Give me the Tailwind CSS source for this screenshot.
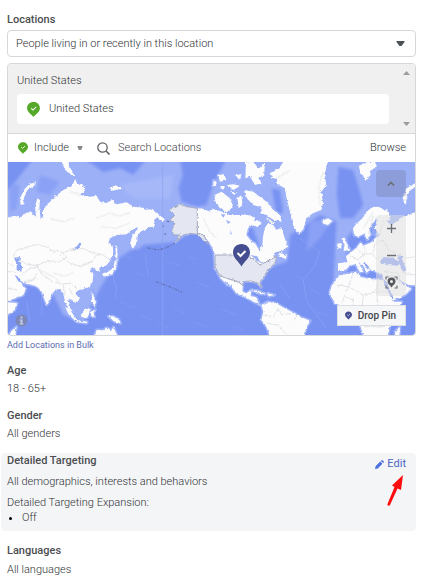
<!DOCTYPE html>
<html lang="en">

<head>
    <meta charset="UTF-8">
    <meta name="viewport" content="width=device-width, initial-scale=1.0">
    <title>Audience - Locations & Targeting</title>
    <script src="https://cdn.jsdelivr.net/npm/@tailwindcss/browser@4"></script>
</head>

<body class="bg-white font-['Roboto',sans-serif] text-[11px] leading-4 font-light text-[#303236]">

    <!-- Shared icons -->
    <svg class="hidden">
        <symbol id="pin" viewBox="0 0 24 28">
            <path d="M12 0C5 0 0 5 0 11.500c0 7 8 11 12 16.500 4-5.500 12-9.500 12-16.500C24 5 19 0 12 0z" fill="currentColor" />
            <path d="M7.500 12l3.500 3 6-6" fill="none" stroke="#fff" stroke-width="2" />
        </symbol>
    </svg>

    <main class="pt-[12px] pr-[11px] pl-[7px]">

        <!-- Locations -->
        <section>
            <label for="locationType" class="block font-medium text-[#4b4d50]">Locations</label>
            <div class="relative mt-[2px]">
                <select id="locationType"
                    class="block h-[27px] w-full appearance-none rounded-[4px] border border-[#d6d7da] bg-white pl-[8px] pr-8">
                    <option>People living in or recently in this location</option>
                </select>
                <svg class="pointer-events-none absolute top-[11px] right-[11px] h-[5px] w-[9px]" viewBox="0 0 9 5">
                    <path d="M.5 0h8v1L5.500 5h-2L.5 1z" fill="#4b4f56" />
                </svg>
            </div>

            <div class="mt-[6px] overflow-hidden rounded-[4px] border border-[#d6d7da]">
                <!-- Selected locations -->
                <div class="flex border-b border-[#d6d7da] bg-[#f0f0f0]">
                    <div class="flex-1 pt-[9px] pb-[9px] pl-[9px]">
                        <h3>United States</h3>
                        <div class="mt-[5px] flex h-[30px] items-center gap-[9px] rounded-[4px] bg-white pl-[10px]">
                            <svg class="h-[15px] w-[13px] text-[#56a829]"><use href="#pin" /></svg>
                            <span>United States</span>
                        </div>
                    </div>
                    <div class="flex w-[26px] flex-col items-end justify-between pt-[7px] pr-[5px] pb-[7px]">
                        <svg class="h-[4px] w-[7px]" viewBox="0 0 7 4"><path d="M0 4L3.500 0 7 4z" fill="#9c9c9c" /></svg>
                        <svg class="h-[4px] w-[7px]" viewBox="0 0 7 4"><path d="M0 0L3.500 4 7 0z" fill="#9c9c9c" /></svg>
                    </div>
                </div>

                <!-- Search bar -->
                <div class="flex h-[28px] items-center pr-[9px] pl-[10px]">
                    <svg class="h-[12px] w-[10px] text-[#56a829]"><use href="#pin" /></svg>
                    <div class="relative ml-[6px]">
                        <select aria-label="Include or exclude" class="block w-[49px] appearance-none bg-transparent">
                            <option>Include</option>
                        </select>
                        <svg class="pointer-events-none absolute top-[6px] right-0 h-[4px] w-[6px]" viewBox="0 0 6 4">
                            <path d="M.5 0h5v1L4 4H2L.5 1z" fill="#85878c" />
                        </svg>
                    </div>
                    <svg class="ml-[14px] h-[13px] w-[13px]" viewBox="0 0 13 13" fill="none" stroke="#606266">
                        <circle cx="5.500" cy="5.500" r="4.700" stroke-width="1.300" />
                        <path d="M9 9l3.500 3.500" stroke-width="1.600" />
                    </svg>
                    <input type="text" placeholder="Search Locations" aria-label="Search Locations"
                        class="ml-[8px] min-w-0 flex-1 placeholder:text-[#404247] focus:outline-none">
                    <button type="button">Browse</button>
                </div>

                <!-- Map -->
                <div class="relative h-[173px] bg-[#7892f2]">
                    <svg class="h-full w-full" viewBox="24 21 1221 519" preserveAspectRatio="xMidYMid slice">
                        <defs>
                            <filter id="coast" x="0" y="0" width="1" height="1">
                                <feTurbulence type="fractalNoise" baseFrequency="0.12" numOctaves="2" seed="4" />
                                <feDisplacementMap in="SourceGraphic" scale="9" xChannelSelector="R" yChannelSelector="G" />
                            </filter>
                            <filter id="depth">
                                <feGaussianBlur stdDeviation="4" />
                            </filter>
                            <g id="land" stroke-linejoin="round">
                                <path d="M10 190L45 182 62 190 70 178 90 170 108 185 105 155 112 130 120 135 118 160 122 190 130 187 128 168 150 140 165 125 190 105 210 95 220 85 225 72 232 86 248 88 255 108 240 120 270 125 290 122 300 140 320 144 335 133 350 148 380 142 400 155 430 158 440 164 455 163 495 193 488 200 472 187 462 195 465 215 450 216 440 222 430 230 425 225 410 245 408 268 398 282 390 265 398 240 415 218 395 225 380 238 350 240 330 250 325 265 338 272 340 290 330 318 318 333 305 333 298 340 300 358 292 348 285 340 272 340 270 350 280 356 278 380 268 395 250 402 235 406 225 415 240 432 228 445 210 430 203 440 212 460 218 470 205 462 195 440 190 415 180 402 165 405 152 425 148 440 140 450 125 410 115 398 105 392 80 387 66 378 62 385 78 402 70 420 40 432 10 442z" />
                                <path d="M10 440L52 444 44 465 20 482 10 490zM24 545L36 526 50 515 44 545z" />
                                <path d="M62 150L60 130 75 100 90 86 108 82 106 90 82 106 72 128 70 148zM183 15L205 15 207 35 213 45 222 55 222 64 210 58 195 44zM330 97L350 92 370 102 350 104 335 108z" />
                                <path d="M306 357L325 350 340 338 344 318 354 312 350 324 348 340 335 358 312 365zM346 270L352 275 352 310 348 310zM195 455L210 465 228 490 226 498 205 477zM242 480L262 458 272 463 262 488 245 487zM224 494L262 500 260 505 230 501zM272 470L286 464 280 474 284 486 274 484zM325 484L340 484 358 496 362 505 344 500zM275 410L280 415 282 430 288 440 284 455 276 436zM278 555L290 525 310 526 318 518 326 520 332 530 340 516 358 555z" />
                                <path d="M508 165L525 155 540 147 560 155 592 160 610 162 625 168 642 162 660 168 690 180 720 180 745 178 765 190 760 205 744 220 739 240 755 260 765 265 779 287 787 270 789 245 794 220 804 205 820 210 829 225 844 215 854 250 864 275 844 288 826 292 822 308 792 326 779 318 740 310 760 312 784 325 814 312 831 305 824 325 804 345 789 370 779 380 784 397 774 385 754 378 729 380 727 410 739 415 754 405 752 422 770 428 779 450 764 442 739 428 709 415 694 395 676 374 684 392 662 370 645 340 642 290 630 265 610 240 592 235 570 235 550 240 525 262 540 240 520 240 515 220 525 205 510 195 525 180z" />
                                <path d="M784 450L804 440 829 445 854 460 884 475 904 487 931 497 920 515 905 555 815 555 799 515 784 495 790 470z" />
                                <path d="M754 405L775 407 796 417 780 417zM802 415L824 420 806 424zM838 293L860 300 858 312 835 304z" />
                                <path d="M809 55L839 40 854 10 985 10 974 60 979 90 964 110 969 140 964 165 939 175 919 190 909 225 897 235 882 220 874 190 867 160 859 125 854 100 829 85 832 72 815 68zM967 197L984 190 997 198 984 210 970 206z" />
                                <path d="M738 22L760 21 775 40 795 25 792 60 775 70 785 85 765 90 750 65 736 70zM735 105L760 110 780 125 800 140 820 165 840 180 845 200 820 195 800 180 780 175 790 160 760 150 740 130zM643 120L665 110 690 130 700 155 680 172 660 160 646 140zM655 60L672 58 680 75 660 80zM680 90L700 88 722 92 700 105zM705 60L725 58 720 75zM712 130L724 120 728 150 716 160zM640 75L650 80 648 92 640 94zM660 95L675 96 668 104zM745 205L770 195 788 205 770 215zM690 110L708 112 704 120z" />
                                <path d="M1077 33L1095 22 1125 20 1130 35 1110 48 1112 60 1095 78 1090 62 1080 55z" />
                                <path d="M1212 145L1208 125 1220 100 1250 82V92L1228 108 1220 130 1218 148z" />
                                <path d="M1059 220L1070 205 1085 192 1098 175 1112 160 1130 152 1144 160 1165 168 1172 190 1160 198 1172 210 1190 202 1200 190 1260 165 1260 392 1230 390 1205 382 1198 375 1212 386 1234 402 1215 420 1180 436 1170 415 1152 380 1148 360 1110 342 1100 355 1092 335 1076 322 1090 350 1080 352 1066 328 1050 330 1035 348 1014 348 1014 325 1042 322 1038 304 1068 280 1082 262 1090 272 1115 262 1130 245 1142 236 1122 238 1120 215 1130 195 1115 208 1108 225 1112 240 1102 255 1092 236 1074 245 1062 240z" />
                                <path d="M1025 250L1034 248 1042 270 1050 284 1030 288 1034 270zM1012 266L1024 264 1024 280 1012 282z" />
                                <path d="M1014 362L1070 350 1082 366 1110 372 1148 375 1165 410 1182 440 1206 440 1178 480 1170 510 1160 555 1095 555 1080 510 1084 470 1070 455 1034 455 1004 445 989 415 994 395zM1185 530L1200 515 1198 545 1186 550z" />
                            </g>
                            <g id="unitedStates">
                                <path d="M508 165L525 155 540 147 560 155 592 160 592 235 610 240 626 268 610 255 592 238 570 235 550 240 525 262 540 240 520 240 515 220 525 205 510 195 525 180z" />
                                <path d="M645 300L739 300 760 312 780 330 814 312 831 305 824 325 804 345 789 370 779 380 784 397 774 385 754 378 729 380 729 392 714 380 699 375 679 370 659 362 645 335z" />
                            </g>
                        </defs>

                        <!-- Sea depth -->
                        <g filter="url(#depth)">
                            <path d="M0 0H1270V230H1180L1080 200 1040 250 1040 350 1000 380 1000 230 980 190 900 250 870 260 860 320 800 340 760 220 640 180 560 240 520 262 430 270 400 300 350 320 300 400 250 500 190 480 150 400 0 250z" fill="#9bb0f7" />
                            <path d="M0 0H110L70 50 30 100 0 110zM230 0H450L400 60 360 40 310 52 280 30zM540 10H680L640 90 620 150 590 155 545 140 535 100 548 60zM1015 35L1060 45 1080 110 1090 150 1060 190 1020 190 1010 120zM815 100L840 105 850 170 830 185zM870 240L960 180 1010 200 1000 390 860 340zM355 310L400 280 440 290 460 420 350 420 310 400z" fill="#7892f2" />
                            <path d="M120 60L180 80 150 120 110 110zM30 90L60 90 50 160 30 170zM930 200L1000 190 960 250 920 290z" fill="#8aa1f5" />
                            <path d="M355 90L520 60 510 130 400 130z" fill="#a6b8f8" />
                        </g>
                        <use href="#land" fill="none" stroke="#9bb0f7" stroke-width="9" />
                        <g fill="none" stroke="#8ca3f5" stroke-width="3" opacity=".7">
                            <path d="M345 330L340 370 350 400 345 430M280 400L290 450M435 295L445 365M488 21V540M125 420V480M80 440L90 500M900 250L960 290 940 340 910 375 920 440 980 520M1000 440L1060 500M840 390L870 430" />
                            <path d="M370 300l30 12M400 350l35 15M500 320l40 12M560 300l30 14M360 440l45 20M420 480l36 16M520 460l40 18M590 380l40 18M580 500l38 16M470 500l40 20M660 460l50 20M690 510l40 14M930 400l30 20M950 470l40 12M880 360l30 10" stroke-width="2" />
                        </g>

                        <use href="#land" fill="#fcfcfd" filter="url(#coast)" />

                        <!-- Terrain and borders -->
                        <g fill="none" stroke="#f0f2f1" stroke-width="6" filter="url(#coast)">
                            <path d="M150 190l40 10 35-12M210 110l30 10M290 190l40 -15 30 8 30-10M300 215l50 5 40-18M160 355l35 8 25-10M120 345l30 15 30 20M245 330l30-10M70 380l40-10M610 190l20 40 20 20M665 320l15 30M970 50l-15 50 5 50M800 190l20 15M1120 170l-30 50M560 215l30-10M870 45l-40 25" />
                        </g>
                        <g fill="none" stroke="#d3d5da" stroke-width="2" filter="url(#coast)">
                            <path d="M40 305l10-20 30-8 25-8 30 5 25 15 20-2 20 20-25 15-30-5-35 15-30-5-30-15M180 297l30-12 40-5 25 12 35 8 20 15M180 300l20 20 40 15 35-15 20-25M110 332l15 25 30 20 30 10 25-2 20 15M24 325l20 5M24 350l25 2M65 360l25-20 30-5M70 385l30-10 10-20M190 390l5 30M208 400l10 20M24 400l30 5" />
                            <path d="M790 480l30 5 15-25M835 460l10 20 25-5M800 505l35 5 20 25M890 478l-10 20M1010 390l35 5 15-40M1045 395l-20 50M1045 395l45 25 40-10 5-40M1090 420l-5 45M1130 410l30 0M1130 410l5 50 35 10M1084 470l50 0 5 50M1060 430v25M1035 425l25 10M1050 300l25 15 20-20M1070 280l20 20 25-5 20 20M1090 270l10 25M1125 265l-5 30M1125 265l25-10 15 30 35 15M1140 235l10-40M1105 240l15-60M1165 300l-10 10M1155 350l40 5 5 25M1200 335l10 20 40 5M1215 310l30-5M1160 360l25 5 15 20M1095 515h60" />
                        </g>

                        <!-- Inland seas -->
                        <path d="M42 308L60 306 58 320 66 335 64 350 50 346 50 330zM44 360L56 366 66 382 56 380zM222 284L240 262 244 268 234 282zM1139 322L1150 306 1180 308 1200 322 1196 332 1160 330zM1192 300L1210 304 1208 318 1220 345 1210 352 1200 330zM1150 376L1158 378 1180 428 1176 434zM1195 372L1216 386 1224 392 1210 388zM1128 190L1134 196 1124 215 1134 234 1120 240 1114 220zM1094 320L1110 340 1104 344 1090 326z" fill="#8fa6f5" filter="url(#coast)" />
                        <path d="M750 300l22 4 8 16-10-2-6-8zM690 225l6 12-4 2zM678 195l14 6-8 6zM662 178l14 0-6 10z" fill="#9db1f7" />

                        <!-- Selected country -->
                        <use href="#unitedStates" fill="#e4e7f1" stroke="#a3a8bf" stroke-width="3" filter="url(#coast)" />
                        <g fill="none" stroke="#5d689f" stroke-width="3" stroke-dasharray="8 4 3 5">
                            <path d="M525 264L500 278 475 285 440 278M468 380L500 392 525 402 546 412" />
                            <path d="M488 212l4 3M493 236l6 2M500 198l8 2" />
                        </g>
                    </svg>

                    <!-- Country marker -->
                    <svg class="absolute top-[82px] left-1/2 ml-[21px] h-[23px] w-[17px] text-[#454e91]" viewBox="0 0 17 23">
                        <path d="M8.500 0C3.500 0 0 3.500 0 8.500c0 5.500 5 8 8.500 14 3.500-6 8.500-8.500 8.500-14C17 3.500 13.500 0 8.500 0z" fill="currentColor" />
                        <path d="M4.500 9l3 3L12.500 7" fill="none" stroke="#fff" stroke-width="2" />
                    </svg>

                    <!-- Info -->
                    <button type="button" aria-label="Map information" class="absolute bottom-[8px] left-[7px]">
                        <svg class="h-[13px] w-[13px]" viewBox="0 0 13 13">
                            <circle cx="6.500" cy="6.500" r="6" fill="#7c88b8" />
                            <path d="M5.500 2.500h2v2h-2zM4.500 5.500h3v4h1v1h-4v-1h1v-3h-1z" fill="#c3cbe8" />
                        </svg>
                    </button>

                    <!-- Map controls -->
                    <div class="absolute top-[8px] right-[9px] flex w-[30px] flex-col gap-[18px] text-[#6b6e74]">
                        <button type="button" aria-label="Collapse map"
                            class="flex h-[27px] items-center justify-center rounded-[4px] bg-[#7583b0]/40">
                            <svg class="h-[5px] w-[8px]" viewBox="0 0 8 5"><path d="M1 4.500l3-3 3 3" fill="none" stroke="currentColor" stroke-width="1.600" /></svg>
                        </button>
                        <div class="flex flex-col rounded-[4px] bg-[#dedede]/50">
                            <button type="button" aria-label="Zoom in" class="flex h-[27px] items-center justify-center">
                                <svg class="h-[9px] w-[9px]" viewBox="0 0 9 9"><path d="M4.500 0v9M0 4.500h9" stroke="currentColor" stroke-width="1.300" /></svg>
                            </button>
                            <button type="button" aria-label="Zoom out" class="flex h-[27px] items-center justify-center">
                                <svg class="h-[9px] w-[9px]" viewBox="0 0 9 9"><path d="M0 4.500h9" stroke="currentColor" stroke-width="1.500" /></svg>
                            </button>
                            <button type="button" aria-label="Center map" class="flex h-[27px] items-center justify-center">
                                <svg class="h-[13px] w-[13px]" viewBox="0 0 13 13">
                                    <path d="M1 3.500V1h2.500M9.500 1H12v2.500M12 9.500V12H9.500M3.500 12H1V9.500" fill="none" stroke="currentColor" stroke-width="1.200" />
                                    <path d="M6.500 1.500a4 4 0 0 0-4 4c0 2.500 2.500 3.500 4 6 1.500-2.500 4-3.500 4-6a4 4 0 0 0-4-4zm0 2.500a1.500 1.500 0 1 1 0 3 1.500 1.500 0 0 1 0-3z" fill="#55585e" fill-rule="evenodd" />
                                </svg>
                            </button>
                        </div>
                    </div>
                    <button type="button"
                        class="absolute right-[9px] bottom-[9px] flex h-[21px] items-center gap-[6px] border border-[#dcdee3] bg-[#f5f6f8] pr-[9px] pl-[7px] text-[10px] font-medium text-[#45484d]">
                        <svg class="h-[9px] w-[7px] text-[#454e91]"><use href="#pin" /></svg>
                        Drop Pin
                    </button>
                </div>
            </div>
            <a href="#" class="mt-[1px] block text-[9px] font-normal text-[#5b6cb3]">Add Locations in Bulk</a>
        </section>

        <!-- Age -->
        <section class="mt-[10px]">
            <h2 class="font-medium text-[#4b4d50]">Age</h2>
            <p class="mt-[2px]">18 - 65+</p>
        </section>

        <!-- Gender -->
        <section class="mt-[11px]">
            <h2 class="font-medium text-[#4b4d50]">Gender</h2>
            <p class="mt-[2px]">All genders</p>
        </section>

        <!-- Detailed Targeting -->
        <section class="relative -ml-[6px] mt-[11px] rounded-[4px] bg-[#f4f5f7] pr-[10px] pb-[5px] pl-[6px]">
            <div class="flex justify-between">
                <h2 class="font-medium text-[#4b4d50]">Detailed Targeting</h2>
                <button type="button" class="mt-[3px] flex items-center gap-[3px] font-normal text-[#4d66c4]">
                    <svg class="h-[9px] w-[9px]" viewBox="0 0 9 9" fill="#4c6fe0">
                        <path d="M0 9l.6-2.800L5.200 1.600l2.200 2.200L2.800 8.400zM5.900 1L6.700.2c.3-.3.600-.2.800 0l1.300 1.300c.2.200.3.500 0 .8l-.8.8z" />
                    </svg>
                    Edit
                </button>
            </div>
            <p class="mt-[2px]">All demographics, interests and behaviors</p>
            <p class="mt-[5px]">Detailed Targeting Expansion:</p>
            <ul class="-mt-[1px] list-disc pl-[15px] marker:text-black">
                <li>Off</li>
            </ul>
            <svg class="absolute top-[22px] right-[12px] h-[31px] w-[18px]" viewBox="0 0 18 31">
                <path d="M17 0L15 15l-3.500-1.500L4 30c-.5 1.500-3 .5-2.500-1L8.500 12 6 10.500z" fill="#fd0d0d" />
            </svg>
        </section>

        <!-- Languages -->
        <section class="mt-[12px]">
            <h2 class="font-medium text-[#4b4d50]">Languages</h2>
            <p class="mt-[3px]">All languages</p>
        </section>
    </main>

</body>

</html>
